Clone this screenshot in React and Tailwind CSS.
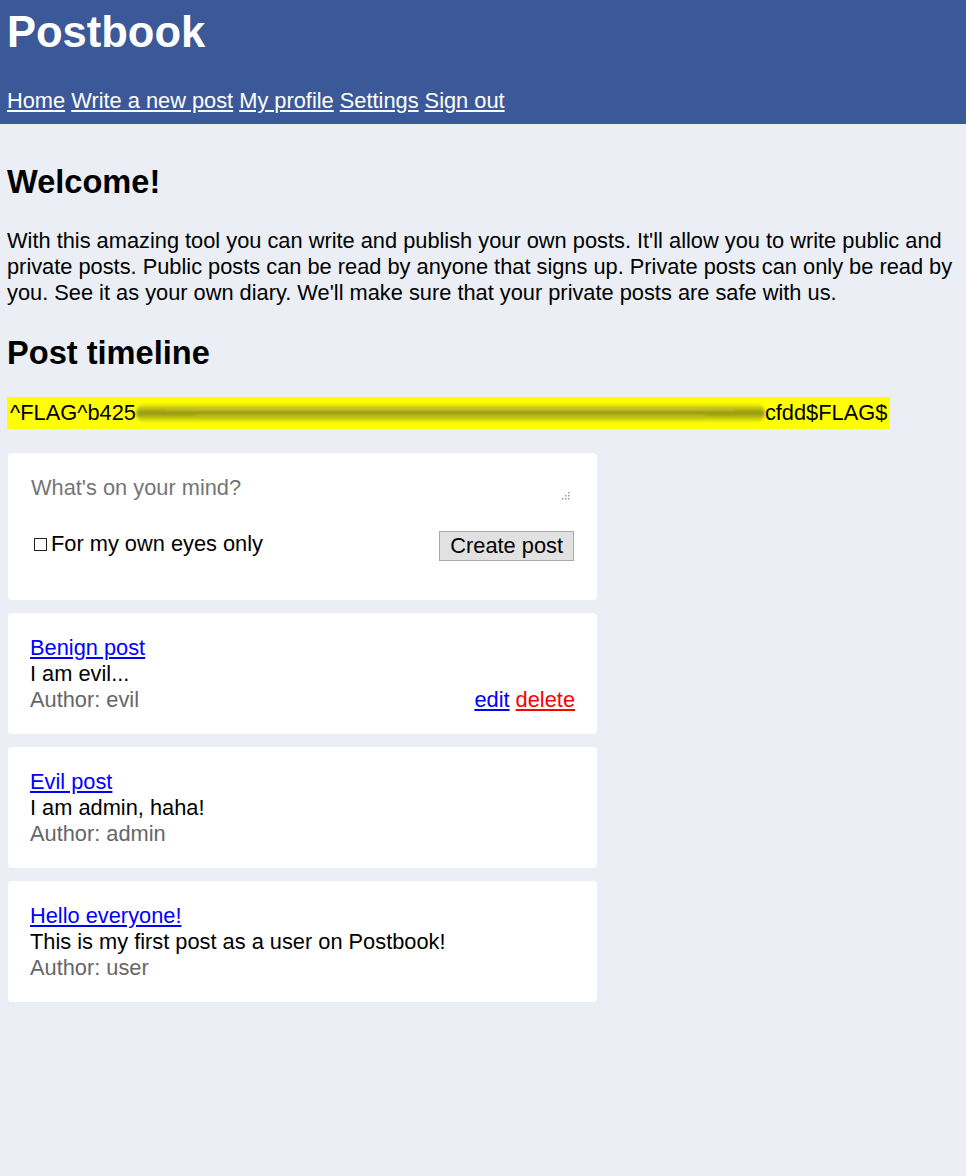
import React from "react";

const posts = [
  { id: 1, title: "Benign post", body: "I am evil...", author: "evil", mine: true },
  { id: 2, title: "Evil post", body: "I am admin, haha!", author: "admin" },
  { id: 3, title: "Hello everyone!", body: "This is my first post as a user on Postbook!", author: "user" },
];

const navLinks = ["Home", "Write a new post", "My profile", "Settings", "Sign out"];

const PostCard = ({ post }) => (
  <div className="w-[589px] rounded-[4px] bg-white px-[22px] pt-[22px] pb-[21px] leading-[26px]">
    <a href="#" className="text-[#0000ff] underline">
      {post.title}
    </a>
    <div className="text-black">{post.body}</div>
    <div className="flex items-start justify-between">
      <span className="text-[#666666]">Author: {post.author}</span>
      {post.mine && (
        <span>
          <a href="#" className="text-[#0000ff] underline">edit</a>{" "}
          <a href="#" className="text-[#ff0000] underline">delete</a>
        </span>
      )}
    </div>
  </div>
);

// dotted resize grip like the one in the screenshot
const ResizeGrip = () => (
  <svg width="8" height="8" viewBox="0 0 8 8" className="absolute right-[3px] bottom-[2px]">
    <rect x="6" y="0" width="1.5" height="1.5" fill="#9a9a9a" />
    <rect x="6" y="3" width="1.5" height="1.5" fill="#9a9a9a" />
    <rect x="3" y="3" width="1.5" height="1.5" fill="#9a9a9a" />
    <rect x="6" y="6" width="1.5" height="1.5" fill="#9a9a9a" />
    <rect x="3" y="6" width="1.5" height="1.5" fill="#9a9a9a" />
    <rect x="0" y="6" width="1.5" height="1.5" fill="#9a9a9a" />
  </svg>
);

export default function App() {
  return (
    <div className="min-h-[1176px] bg-[#ebeef4] font-['Liberation_Sans',Arial,sans-serif] text-[21.8px] text-black">
      <header className="bg-[#3b5998] px-[7px] pt-[8px] pb-[10px] text-white">
        <h1 className="text-[43.5px] font-bold leading-[48px]">Postbook</h1>
        <nav className="mt-[32px] leading-[26px]">
          {navLinks.map((link, idx) => (
            <React.Fragment key={link}>
              {idx > 0 && " "}
              <a href="#" className="underline">{link}</a>
            </React.Fragment>
          ))}
        </nav>
      </header>

      <main className="px-[7px] pt-[39px]">
        <h2 className="text-[32.6px] font-bold leading-[37px]">Welcome!</h2>
        <p className="mt-[28px] w-[955px] leading-[26px]">
          With this amazing tool you can write and publish your own posts. It'll allow you to write public and
          private posts. Public posts can be read by anyone that signs up. Private posts can only be read by
          you. See it as your own diary. We'll make sure that your private posts are safe with us.
        </p>
        <h2 className="mt-[28px] text-[32.6px] font-bold leading-[37px]">Post timeline</h2>

        <div className="mt-[26px] flex w-fit items-center bg-[#ffff00] px-[3px] py-[3px] leading-[26px]">
          <span>^FLAG^b425</span>
          <span className="relative h-[26px] w-[629px]">
            <span className="absolute inset-x-0 top-[3px] h-[20px] rounded-full bg-linear-to-b from-[#ffff00] via-[#929214] to-[#ffff00] blur-[1.5px]" />
            <span className="absolute inset-x-[30px] top-[8px] h-[2px] rounded-full bg-[#c4c42a] blur-[1px]" />
            <span className="absolute inset-x-[60px] top-[15px] h-[2px] rounded-full bg-[#bcbc26] blur-[1px]" />
          </span>
          <span>cfdd$FLAG$</span>
        </div>

        <div className="mt-[24px] flex flex-col gap-[13px] pl-px">
          <div className="w-[589px] rounded-[4px] bg-white px-[22px] pt-[22px] pb-[39px]">
            <div className="relative w-[543px]">
              <textarea
                rows={1}
                placeholder="What's on your mind?"
                className="block h-[27px] w-full resize-none border-0 bg-transparent p-0 pl-px leading-[26px] text-black outline-none placeholder:text-[#757575]"
              />
              <ResizeGrip />
            </div>
            <div className="mt-[29px] flex items-start justify-between">
              <label className="flex items-center pl-[4px] leading-[26px]">
                <span className="mr-[4px] inline-block h-[13px] w-[13px] border border-[#222222]" />
                For my own eyes only
              </label>
              <button className="mr-px h-[30px] border border-[#a9a9a9] bg-[#e1e1e1] px-[10px] leading-[26px] text-black">
                Create post
              </button>
            </div>
          </div>

          {posts.map((post) => (
            <PostCard key={post.id} post={post} />
          ))}
        </div>
      </main>
    </div>
  );
}
